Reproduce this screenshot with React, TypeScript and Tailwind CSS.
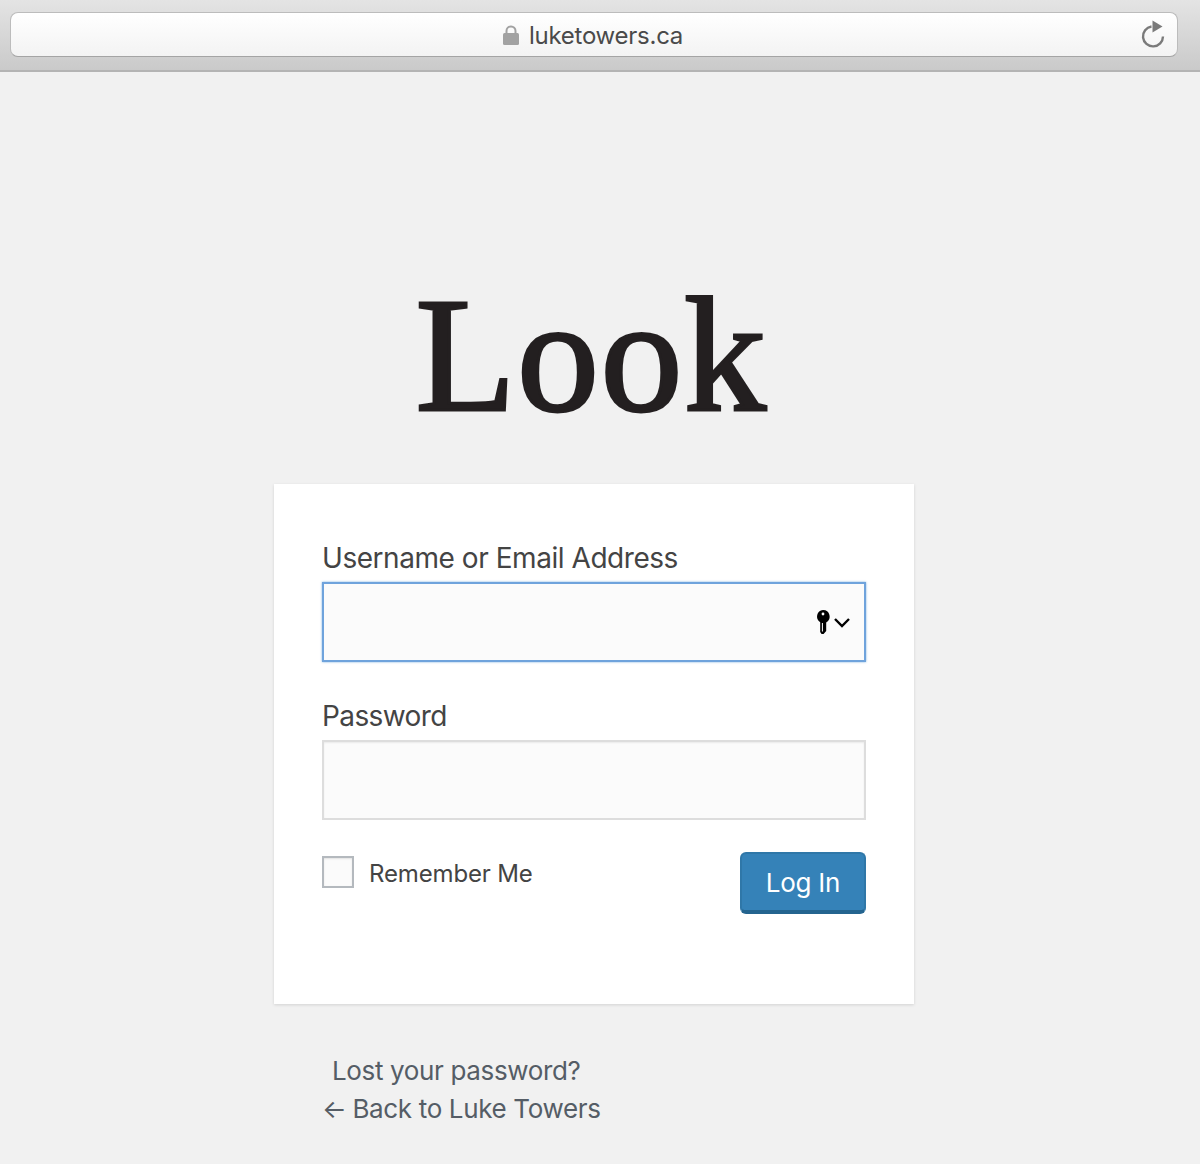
import React from 'react';

const sans = "font-['Inter','Liberation_Sans',sans-serif]";

const KeyIcon = () => (
  <svg width="16" height="26" viewBox="0 0 16 26" className="text-black">
    <path d="M8 1a6.6 6.6 0 0 1 3.2 12.4V22l-2.6 3H6.6l-1.4-2V13.2A6.6 6.6 0 0 1 8 1z" fill="currentColor" />
    <circle cx="8" cy="5" r="1.4" fill="#fff" />
    <path d="M7.4 14v8.5" stroke="#fff" strokeWidth="1" />
  </svg>
);

const App: React.FC = () => {
  return (
    <div className={`${sans} w-[1200px] h-[1164px] bg-[#f1f1f1] overflow-hidden`}>
      {/* Browser bar */}
      <div className="h-[72px] pt-3 pl-[10px] pr-[22px] border-b-2 border-[#b4b4b4] bg-gradient-to-b from-[#e4e4e4] to-[#cacaca]">
        <div className="relative h-[45px] flex items-center justify-center rounded-[8px] border border-[#bcbcbc] border-b-[#a4a4a4] bg-gradient-to-b from-[#ffffff] to-[#f3f3f3] pt-[2px] pr-[2px]">
          <div className="flex items-center gap-[10px]">
            <svg width="16" height="20" viewBox="0 0 16 20" className="text-[#a2a2a2] mb-[2px]">
              <path d="M3.5 9V6a4.5 4.5 0 0 1 9 0v3" fill="none" stroke="currentColor" strokeWidth="2" />
              <rect x="0" y="8" width="16" height="12" rx="1.5" fill="currentColor" />
            </svg>
            <span className="text-[24px] leading-none text-[#4a4a4a] tracking-[-0.25px]">luketowers.ca</span>
          </div>
          <svg width="24" height="28" viewBox="0 0 24 28" className="absolute right-[12px] top-[7px] text-[#7a7a7a]">
            <path d="M10.5 6.5a10 10 0 1 0 11.5 10" fill="none" stroke="currentColor" strokeWidth="2.4" />
            <path d="M11.5 0.5l10 6-10 6z" fill="currentColor" />
          </svg>
        </div>
      </div>

      {/* Logo */}
      <div className="h-[412px] flex flex-col items-center pt-[201px]">
        <h1 className="font-['Liberation_Serif',serif] text-[164px] leading-[164px] tracking-[1.5px] text-[#231f20] font-normal ml-[-17px] [-webkit-text-stroke:3px_#231f20]">Look</h1>
      </div>

      {/* Login form */}
      <div className="ml-[274px] w-[640px] h-[520px] bg-white px-12 pt-[58px] shadow-[0_1px_3px_rgba(0,0,0,0.13)]">
        <label className="block text-[28px] leading-[32px] text-[#444444] mb-2 tracking-[-0.45px]">Username or Email Address</label>
        <div className="h-20 flex items-center justify-end pr-[13px] gap-[2px] bg-[#fbfbfb] border-2 border-[#6fa3dc] shadow-[0_0_2px_rgba(91,157,217,0.8)]">
          <KeyIcon />
          <svg width="18" height="11" viewBox="0 0 18 11" className="text-black">
            <path d="M2 2l7 7 7-7" fill="none" stroke="currentColor" strokeWidth="2.4" />
          </svg>
        </div>
        <label className="block mt-[38px] text-[28px] leading-[32px] text-[#444444] mb-2 tracking-[-0.6px]">Password</label>
        <div className="h-20 bg-[#fbfbfb] border-2 border-[#dddddd] shadow-[inset_0_1px_2px_rgba(0,0,0,0.07)]" />
        <div className="flex justify-between items-start mt-8">
          <div className="flex items-start gap-[15px] mt-1">
            <div className="w-8 h-8 bg-[#fbfbfb] border-2 border-[#b4b9be] shadow-[inset_0_1px_2px_rgba(0,0,0,0.1)]" />
            <span className="text-[24px] leading-[32px] text-[#444444] tracking-[-0.15px] pt-[2px]">Remember Me</span>
          </div>
          <button className="w-[126px] h-[62px] rounded-[6px] bg-[#3582b8] border-2 border-[#2f77a8] border-b-4 border-b-[#24648f] text-white text-[26px] font-normal tracking-[-0.25px]">Log In</button>
        </div>
      </div>

      {/* Links */}
      <div className="pl-[322px] mt-[48px] text-[26px] leading-[38px] text-[#555d66] tracking-[-0.35px]">
        <div className="pl-[10px]">Lost your password?</div>
        <div><span className="mr-[-1px]">←</span> Back to Luke Towers</div>
      </div>
    </div>
  );
};

export default App;
